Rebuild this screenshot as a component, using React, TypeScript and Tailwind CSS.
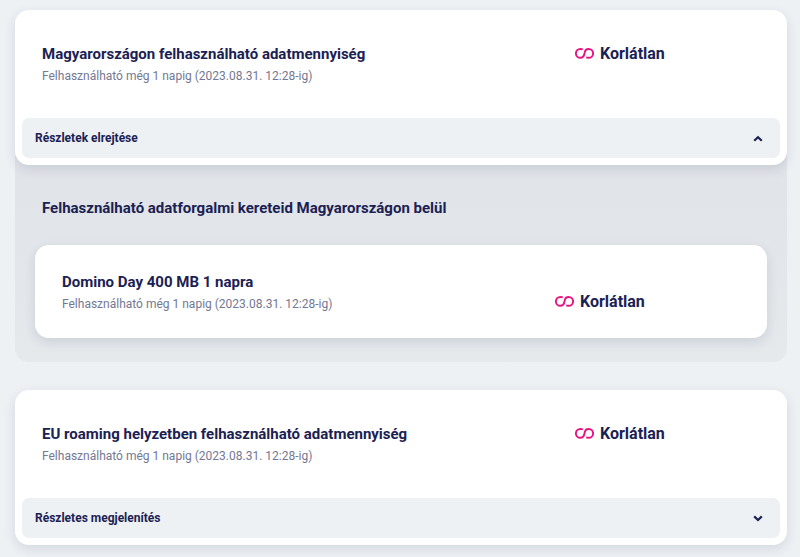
import React, { useState } from "react";

const VALIDITY = "Felhasználható még 1 napig (2023.08.31. 12:28-ig)";

const InfinityIcon = () => (
  <svg width="19" height="12" viewBox="0 0 19 12" fill="none" aria-hidden="true">
    <path
      d="M7.8 1.4C7.1 1.1 6.3 1 5.4 1A4.5 4.4 0 0 0 5.4 9.8C7.7 9.8 8.7 8.6 9.1 7.1L9.9 3.7C10.3 2.2 11.3 1 13.6 1A4.5 4.4 0 0 1 13.6 9.8C12.7 9.8 11.9 9.7 11.2 9.4"
      stroke="#e6127f"
      strokeWidth="1.9"
    />
  </svg>
);

const Chevron = ({ isUp }: { isUp: boolean }) => (
  <svg width="10" height="8" viewBox="0 0 10 8" fill="none" aria-hidden="true">
    <path
      d={isUp ? "M1.2 6.8L5 3.2L8.8 6.8" : "M1.2 2.4L5 6L8.8 2.4"}
      stroke="#1b2152"
      strokeWidth="2.2"
    />
  </svg>
);

const Unlimited = () => (
  <div className="flex w-[185px] shrink-0 items-center gap-[6px]">
    <InfinityIcon />
    <span className="text-[16px] leading-6 font-bold">Korlátlan</span>
  </div>
);

const QuotaInfo = ({ title }: { title: string }) => (
  <div className="min-w-0 flex-1">
    <h2 className="text-[15px] leading-6 font-bold">{title}</h2>
    <p className="text-[12px] leading-5 text-[#747892]">{VALIDITY}</p>
  </div>
);

type QuotaCardProps = {
  title: string;
  defaultOpen?: boolean;
  children?: React.ReactNode;
};

const QuotaCard = ({ title, defaultOpen = false, children }: QuotaCardProps) => {
  const [isOpen, setIsOpen] = useState(defaultOpen);

  return (
    <section>
      <div className="relative z-10 rounded-[14px] bg-white p-[7px] shadow-[0_4px_12px_rgba(30,40,80,0.12)]">
        <div className="flex items-start px-5 pt-[25px] pb-8">
          <QuotaInfo title={title} />
          <Unlimited />
        </div>
        <button
          onClick={() => setIsOpen(!isOpen)}
          aria-expanded={isOpen}
          className="flex h-10 w-full items-center justify-between rounded-[7px] bg-[#edf1f4] pr-[17px] pl-[13px] text-[12px] font-bold"
        >
          {isOpen ? "Részletek elrejtése" : "Részletes megjelenítés"}
          <Chevron isUp={isOpen} />
        </button>
      </div>
      {isOpen && children}
    </section>
  );
};

const App = () => {
  return (
    <main className="flex min-h-screen flex-col gap-7 bg-[#edf1f4] pt-[10px] pr-[13px] pb-3 pl-[15px] font-['Roboto','Liberation_Sans',sans-serif] text-[#1b2152]">
      <QuotaCard title="Magyarországon felhasználható adatmennyiség" defaultOpen>
        <div className="-mt-4 rounded-b-[14px] bg-linear-to-b from-[#e0e3e8] to-[#e5e9ec] px-5 pt-[47px] pb-6">
          <h2 className="px-[7px] text-[15px] leading-6 font-bold">
            Felhasználható adatforgalmi kereteid Magyarországon belül
          </h2>
          <div className="mt-[25px] flex items-end rounded-[14px] bg-white px-[27px] pt-[25px] pb-6 shadow-[0_4px_12px_rgba(30,40,80,0.12)]">
            <QuotaInfo title="Domino Day 400 MB 1 napra" />
            <Unlimited />
          </div>
        </div>
      </QuotaCard>
      <QuotaCard title="EU roaming helyzetben felhasználható adatmennyiség" />
    </main>
  );
};

export default App;
